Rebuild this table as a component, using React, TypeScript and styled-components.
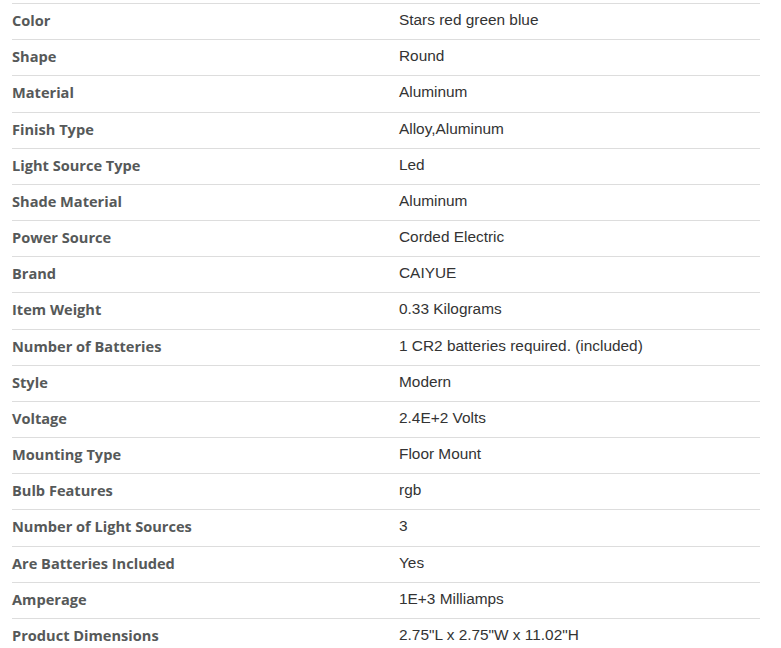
import React from "react";
import styled, { createGlobalStyle } from "styled-components";

const Global = createGlobalStyle`
  html, body { margin: 0; padding: 0; background: #ffffff; }
`;

const Page = styled.div`
  padding: 3px 0 0 12px;
  width: 748px;
`;

const Table = styled.div`
  display: grid;
  grid-template-columns: 387px 1fr;
`;

const Row = styled.div`
  display: contents;
`;

const Cell = styled.div<{ $label?: boolean }>`
  box-sizing: border-box;
  height: 36.18px;
  padding-bottom: 3px;
  border-top: 1px solid #dddddd;
  display: flex;
  align-items: center;
  font-family: ${(p) => (p.$label ? `"Open Sans", "Lato", sans-serif` : `"Liberation Sans", Arial, sans-serif`)};
  font-weight: ${(p) => (p.$label ? 700 : 400)};
  font-size: ${(p) => (p.$label ? "14.6px" : "15.4px")};
  color: ${(p) => (p.$label ? "#565959" : "#333333")};
  white-space: nowrap;
`;

const rows: [string, string][] = [
  ["Color", "Stars red green blue"],
  ["Shape", "Round"],
  ["Material", "Aluminum"],
  ["Finish Type", "Alloy,Aluminum"],
  ["Light Source Type", "Led"],
  ["Shade Material", "Aluminum"],
  ["Power Source", "Corded Electric"],
  ["Brand", "CAIYUE"],
  ["Item Weight", "0.33 Kilograms"],
  ["Number of Batteries", "1 CR2 batteries required. (included)"],
  ["Style", "Modern"],
  ["Voltage", "2.4E+2 Volts"],
  ["Mounting Type", "Floor Mount"],
  ["Bulb Features", "rgb"],
  ["Number of Light Sources", "3"],
  ["Are Batteries Included", "Yes"],
  ["Amperage", "1E+3 Milliamps"],
  ["Product Dimensions", "2.75\"L x 2.75\"W x 11.02\"H"],
];

export default function App() {
  return (
    <>
      <Global />
      <Page>
        <Table>
          {rows.map(([k, v]) => (
            <Row key={k}>
              <Cell $label>{k}</Cell>
              <Cell>{v}</Cell>
            </Row>
          ))}
        </Table>
      </Page>
    </>
  );
}
